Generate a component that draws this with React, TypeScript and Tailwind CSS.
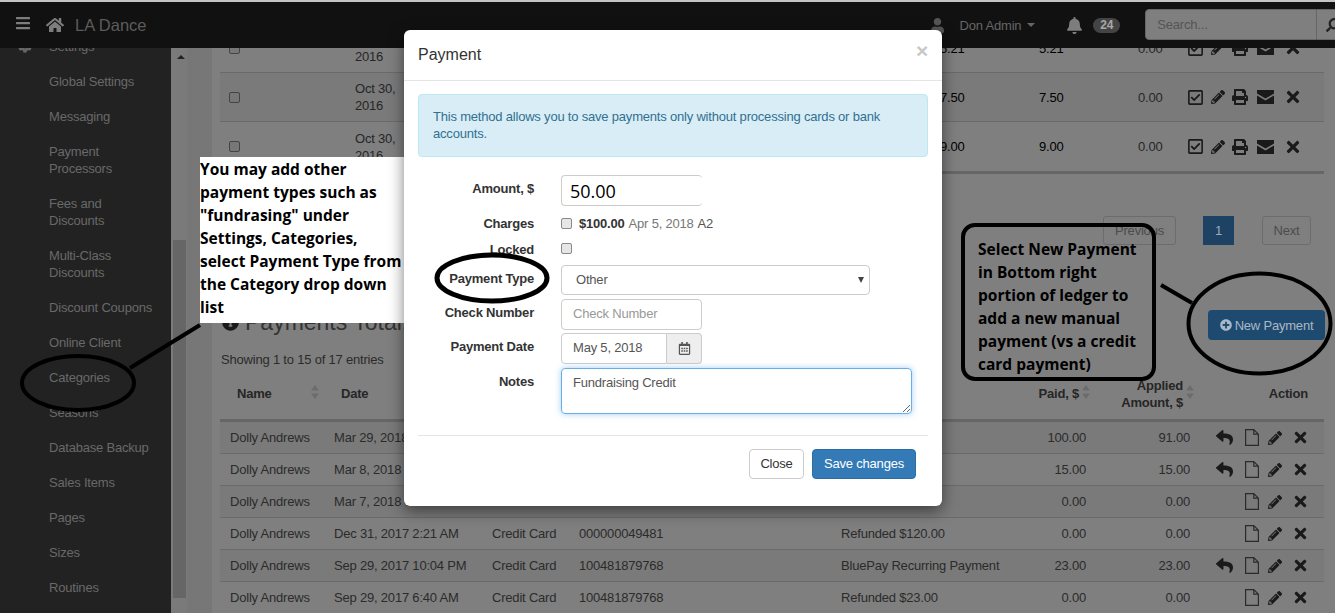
import React from "react";
import {
  FaBars,
  FaBell,
  FaCog,
  FaHome,
  FaInfoCircle,
  FaPencilAlt,
  FaPlusCircle,
  FaPrint,
  FaRegCalendarAlt,
  FaRegCheckSquare,
  FaReply,
  FaSearch,
  FaTimes,
  FaUser,
} from "react-icons/fa";

const menu = [
  "Settings",
  "Global Settings",
  "Messaging",
  "Payment Processors",
  "Fees and Discounts",
  "Multi-Class Discounts",
  "Discount Coupons",
  "Online Client",
  "Categories",
  "Seasons",
  "Database Backup",
  "Sales Items",
  "Pages",
  "Sizes",
  "Routines",
];

const ledger = [
  { amount: "5.21", paid: "5.21" },
  { amount: "7.50", paid: "7.50" },
  { amount: "9.00", paid: "9.00" },
];

const payments = [
  { date: "Mar 29, 2018 2:13 PM", type: "Credit Card", ref: "100481879768", note: "", paid: "100.00", applied: "91.00", reply: true },
  { date: "Mar 8, 2018 10:04 PM", type: "Credit Card", ref: "100481879768", note: "", paid: "15.00", applied: "15.00", reply: true },
  { date: "Mar 7, 2018 6:40 AM", type: "Credit Card", ref: "100481879768", note: "", paid: "0.00", applied: "0.00", reply: false },
  { date: "Dec 31, 2017 2:21 AM", type: "Credit Card", ref: "000000049481", note: "Refunded $120.00", paid: "0.00", applied: "0.00", reply: false },
  { date: "Sep 29, 2017 10:04 PM", type: "Credit Card", ref: "100481879768", note: "BluePay Recurring Payment", paid: "23.00", applied: "23.00", reply: true },
  { date: "Sep 29, 2017 6:40 AM", type: "Credit Card", ref: "100481879768", note: "Refunded $23.00", paid: "0.00", applied: "0.00", reply: false },
];

const Envelope = () => (
  <svg width="17" height="14" viewBox="0 0 17 14" className="ml-[2px] text-[#1a1a1a]">
    <path d="M0 0h17v3.5L8.5 8.6 0 3.5z M0 5.4l8.5 5 8.5-5V14H0z" fill="currentColor" />
  </svg>
);

const FileIcon = () => (
  <svg width="14" height="17" viewBox="0 0 14 17" fill="none" stroke="#2b2b2b" strokeWidth="1.2">
    <path d="M.6.6h8.2l4.6 4.6v11.2H.6z M8.8.6v4.6h4.6" />
  </svg>
);

const SortArrows = () => (
  <svg width="8" height="14" viewBox="0 0 8 14" className="shrink-0 text-[#6c6c6c]">
    <path d="M4 0l4 5.5H0z M4 14l4-5.5H0z" fill="currentColor" />
  </svg>
);

const Row = ({ label, className, labelClass = "pt-[5px]", children }: { label: string; className: string; labelClass?: string; children: React.ReactNode }) => (
  <div className={`flex ${className}`}>
    <label className={`w-[130px] shrink-0 text-right font-bold text-[#333] ${labelClass}`}>{label}</label>
    <div className="ml-[27px] flex-1">{children}</div>
  </div>
);

export default function App() {
  return (
    <div className="relative flex h-[613px] w-[1335px] flex-col overflow-hidden bg-[#7f7f7f] font-['Liberation_Sans',Arial,sans-serif] text-[13px] leading-[17px] tracking-[-0.2px] text-[#262626]">
      {/* Top bar */}
      <header className="relative z-10 flex h-[48px] shrink-0 items-center border-t-2 border-[#c4c4c4] bg-[#111] text-[#6b6b6b]">
        <FaBars className="ml-[15px] -mt-[5px] text-[#7d7d7d]" size={16} />
        <FaHome className="ml-[15px] text-[#7d7d7d]" size={18} />
        <span className="ml-[11px] text-[16.5px] tracking-normal text-[#5c5c5c]">LA Dance</span>
        <FaUser className="ml-[783px] text-[#555]" size={15} />
        <span className="ml-[15px] text-[#666]">Don Admin</span>
        <span className="ml-[6px] h-0 w-0 border-x-[4px] border-t-[4px] border-x-transparent border-t-[#666]" />
        <FaBell className="ml-[31px] text-[#7d7d7d]" size={17} />
        <span className="ml-[10px] rounded-[10px] bg-[#444] px-[7px] py-[1px] text-[12px] font-bold leading-[13px] text-[#a8a8a8]">24</span>
        <div className="ml-[25px] mt-[7px] flex h-[31px] flex-1 self-start">
          <div className="flex flex-1 items-center rounded-l-[4px] border border-[#666] bg-[#7f7f7f] pl-[11px] text-[#555]">Search...</div>
          <div className="flex w-[18px] items-start overflow-hidden border-y border-[#666] bg-[#7f7f7f] pl-[9px] pt-[8px] text-[#222]">
            <FaSearch size={14} className="shrink-0 -scale-x-100" />
          </div>
        </div>
      </header>

      <div className="flex min-h-0 flex-1">
        {/* Sidebar */}
        <aside className="w-[171px] shrink-0 overflow-hidden bg-[#222] pl-[49px] pr-[16px] text-[#696969]">
          <ul className="-mt-[19px]">
            {menu.map((item) => (
              <li key={item} className="relative py-[9px]">
                {item === "Settings" && <FaCog className="absolute -left-[31px] top-[10px] text-[#666]" size={14} />}
                {item}
              </li>
            ))}
          </ul>
        </aside>

        {/* Sidebar scrollbar */}
        <div className="relative flex w-[16px] shrink-0 flex-col bg-[#7a7a7a] pl-[2px]">
          <span className="ml-[4px] mt-[7px] h-0 w-0 border-x-[4px] border-b-[4px] border-x-transparent border-b-[#222]" />
          <div className="mt-[181px] h-[358px] w-[13px] bg-[#666]" />
        </div>
        <div className="w-[25px] shrink-0 bg-[#777]" />

        {/* Ledger content */}
        <main className="flex min-w-0 flex-1 flex-col overflow-hidden pl-[8px] pr-[11px]">
          <div className="-mt-[24px] shrink-0 border-b-[3px] border-[#666]">
            {ledger.map((row, i) => (
              <div key={i} className={`grid h-[49px] grid-cols-[135px_585px_99px_99px_49px_137px] items-center border-b border-[#6a6a6a] last:border-b-0 ${i === 1 ? "bg-[#7a7a7a]" : ""}`}>
                <input type="checkbox" className="ml-[9px] h-[11px] w-[11px] appearance-none rounded-[2px] border border-[#444] bg-[#777]" />
                <span className="w-[60px]">Oct 30, 2016</span>
                <span className="text-black">{row.amount}</span>
                <span className="text-black">{row.paid}</span>
                <span>0.00</span>
                <span className="flex items-center gap-[7px] text-[#1a1a1a]">
                  <FaRegCheckSquare size={17} />
                  <FaPencilAlt size={14} />
                  <FaPrint size={16} />
                  <Envelope />
                  <FaTimes size={18} className="ml-[3px]" />
                </span>
              </div>
            ))}
          </div>

          <nav className="mt-[42px] flex h-[29px] shrink-0 items-stretch text-[#4c4c4c]">
            <span className="ml-[883px] flex w-[73px] items-center justify-center rounded-[3px] border border-[#6c6c6c]">Previous</span>
            <span className="ml-[27px] flex w-[31px] items-center justify-center bg-[#1d4263] text-[#a0acb8]">1</span>
            <span className="ml-[28px] flex w-[49px] items-center justify-center rounded-[3px] border border-[#6c6c6c]">Next</span>
          </nav>

          <div className="mt-[65px] flex h-[30px] shrink-0 items-center">
            <FaInfoCircle className="ml-[2px] -mt-[5px] text-[#1a1a1a]" size={17} />
            <h2 className="ml-[6px] -mt-[5px] text-[23px] font-normal tracking-normal text-[#333]">Payments Total:</h2>
            <button className="ml-auto mr-[-1px] flex h-[30px] w-[117px] items-center justify-center gap-[3px] rounded-[4px] bg-[#1f4a6f] text-[#a9b8c6]">
              <FaPlusCircle size={12} />
              New Payment
            </button>
          </div>

          <p className="mt-[11px] shrink-0 pl-px text-[#2b2b2b]">Showing 1 to 15 of 17 entries</p>

          {/* Payments table */}
          <div className="mt-[10px] grid h-[44px] shrink-0 grid-cols-[104px_158px_87px_262px_195px_70px_104px_124px] border-b-[3px] border-[#666] font-bold text-[#262626]">
            <span className="flex items-start justify-between pl-[17px] pr-[5px] pt-[7px]">Name <SortArrows /></span>
            <span className="pl-[17px] pt-[7px]">Date</span>
            <span />
            <span />
            <span />
            <span className="flex items-start justify-end gap-[3px] pr-[6px] pt-[7px]">Paid, $ <SortArrows /></span>
            <span className="-mt-px flex items-start justify-end gap-[3px] pr-[6px] text-right">Applied Amount, $ <span className="pt-[8px]"><SortArrows /></span></span>
            <span className="pr-[16px] pt-[7px] text-right">Action</span>
          </div>
          {payments.map((p, i) => (
            <div key={i} className={`grid h-[32px] shrink-0 grid-cols-[104px_158px_87px_262px_195px_70px_104px_124px] items-center border-b border-[#6a6a6a] text-[#2b2b2b] ${i % 2 === 0 ? "bg-[#7a7a7a]" : ""}`}>
              <span className="pl-[10px]">Dolly Andrews</span>
              <span className="pl-[10px]">{p.date}</span>
              <span className="pl-[10px]">{p.type}</span>
              <span className="pl-[10px]">{p.ref}</span>
              <span className="pl-[10px]">{p.note}</span>
              <span className="pr-[10px] text-right">{p.paid}</span>
              <span className="pr-[10px] text-right">{p.applied}</span>
              <span className="flex items-center pl-[16px] text-[#1a1a1a]">
                <span className="w-[29px]">{p.reply && <FaReply size={17} />}</span>
                <FileIcon />
                <FaPencilAlt size={14} className="ml-[9px]" />
                <FaTimes size={17} className="ml-[10px]" />
              </span>
            </div>
          ))}
        </main>
      </div>

      {/* Right hand note */}
      <div className="absolute left-[961px] top-[223px] z-20 h-[158px] w-[195px] whitespace-nowrap rounded-[14px] border-[4px] border-black pl-[13px] pt-[11px] font-['Open_Sans',sans-serif] text-[15.5px] font-bold leading-[23px] tracking-normal text-black">
        Select New Payment
        <br />
        in Bottom right
        <br />
        portion of ledger to
        <br />
        add a new manual
        <br />
        payment (vs a credit
        <br />
        card payment)
      </div>

      {/* Left hand note */}
      <div className="absolute left-[200px] top-[157px] z-20 h-[166px] w-[206px] overflow-hidden whitespace-nowrap bg-white pt-px font-['Open_Sans',sans-serif] text-[15.5px] font-bold leading-[23px] tracking-normal text-black">
        You may add other
        <br />
        payment types such as
        <br />
        "fundrasing" under
        <br />
        Settings, Categories,
        <br />
        select Payment Type from
        <br />
        the Category drop down
        <br />
        list
      </div>

      {/* Payment modal */}
      <div className="absolute left-[404px] top-[30px] z-20 h-[476px] w-[538px] rounded-[6px] bg-white text-[#333] shadow-[0_5px_15px_rgba(0,0,0,0.5)]">
        <div className="flex h-[51px] items-center justify-between border-b border-[#e5e5e5] px-[14px] pb-[2px]">
          <h4 className="text-[16px] tracking-normal text-[#333]">Payment</h4>
          <span className="-mt-[8px] text-[21px] font-bold leading-none text-[#c8c8c8]">×</span>
        </div>
        <div className="mx-[14px] mt-[13px] h-[63px] rounded-[4px] border border-[#bce8f1] bg-[#d9edf7] px-[14px] pt-[13px] text-[#31708f]">
          This method allows you to save payments only without processing cards or bank accounts.
        </div>

        <div className="mt-[18px]">
          <Row label="Amount, $" className="h-[31px]">
            <input
              defaultValue="50.00"
              className="h-[31px] w-[141px] rounded-[4px] border border-r-0 border-[#ccc] pl-[8px] font-['Open_Sans',sans-serif] text-[18px] tracking-normal text-black outline-none"
            />
          </Row>
          <Row label="Charges" labelClass="" className="mt-[9px] h-[25px]">
            <div className="flex items-center">
              <input type="checkbox" className="h-[11px] w-[11px] appearance-none rounded-[2px] border border-[#8a8a8a] bg-[#e6e6e6]" />
              <b className="ml-[7px]">$100.00</b>
              <span className="ml-[4px] text-[#777]">Apr 5, 2018</span>
              <span className="ml-[4px] text-[#555]">A2</span>
            </div>
          </Row>
          <Row label="Locked" labelClass="" className="mt-px h-[24px]">
            <input type="checkbox" className="mt-[2px] block h-[11px] w-[11px] appearance-none rounded-[2px] border border-[#8a8a8a] bg-[#e6e6e6]" />
          </Row>
          <Row label="Payment Type" className="h-[34px]">
            <div className="relative h-[30px] w-[309px]">
              <select className="h-full w-full appearance-none rounded-[4px] border border-[#ccc] bg-white pb-[2px] pl-[14px] text-[#555] outline-none">
                <option>Other</option>
              </select>
              <span className="absolute right-[6px] top-[12px] h-0 w-0 border-x-[3px] border-t-[6px] border-x-transparent border-t-[#444]" />
            </div>
          </Row>
          <Row label="Check Number" className="h-[34px]">
            <input
              placeholder="Check Number"
              className="h-[31px] w-[141px] rounded-[4px] border border-[#ccc] px-[11px] pb-[2px] text-[#555] outline-none placeholder:text-[#999]"
            />
          </Row>
          <Row label="Payment Date" className="h-[35px]">
            <div className="flex h-[31px] w-[141px]">
              <input
                defaultValue="May 5, 2018"
                className="w-[106px] rounded-l-[4px] border border-[#ccc] px-[11px] pb-[2px] text-[#555] outline-none"
              />
              <span className="flex flex-1 items-center justify-center rounded-r-[4px] border border-l-0 border-[#ccc] bg-[#eee] text-[#555]">
                <FaRegCalendarAlt size={13} />
              </span>
            </div>
          </Row>
          <Row label="Notes" className="h-[46px]">
            <textarea
              defaultValue="Fundraising Credit"
              className="block h-[46px] w-[351px] rounded-[4px] border border-[#66afe9] px-[11px] py-[5px] text-[#555] shadow-[0_0_6px_rgba(102,175,233,0.6)] outline-none"
            />
          </Row>
        </div>

        <div className="mx-[14px] mt-[21px] flex h-[44px] items-end justify-end gap-[8px] border-t border-[#e5e5e5] pr-[12px]">
          <button className="h-[30px] w-[55px] rounded-[4px] border border-[#ccc] bg-white pb-[2px] text-[#333]">Close</button>
          <button className="h-[30px] w-[104px] rounded-[4px] border border-[#2e6da4] bg-[#337ab7] pb-[2px] text-white">Save changes</button>
        </div>
      </div>

      {/* Hand drawn callouts */}
      <svg className="pointer-events-none absolute inset-0 z-30" width="1335" height="613" fill="none" stroke="#000">
        <ellipse cx="78" cy="383" rx="56" ry="27" strokeWidth="4" />
        <path d="M130 368 L200 325" strokeWidth="4" />
        <ellipse cx="492" cy="278" rx="55" ry="23" strokeWidth="5" />
        <ellipse cx="1259.5" cy="323.5" rx="71" ry="50" strokeWidth="4" />
        <path d="M1161 285 L1192 303" strokeWidth="4" />
      </svg>
    </div>
  );
}
